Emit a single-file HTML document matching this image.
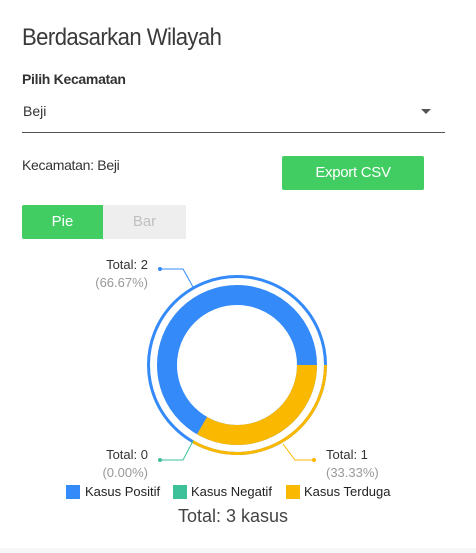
<!DOCTYPE html>
<html><head><meta charset="utf-8"><style>
html,body{margin:0;padding:0;background:#fff;width:476px;height:553px;overflow:hidden;font-family:"Liberation Sans",sans-serif;color:#333;position:relative}
.a{position:absolute;white-space:nowrap}
</style></head><body>
<div class="a" style="left:22px;top:24px;font-size:24px;color:#3a3a3a;letter-spacing:-0.6px;transform:scaleX(0.92);transform-origin:left">Berdasarkan Wilayah</div>
<div class="a" style="left:22px;top:71px;font-size:14px;font-weight:bold;color:#333;letter-spacing:-0.3px">Pilih Kecamatan</div>
<div class="a" style="left:23px;top:103px;font-size:14px;color:#333">Beji</div>
<div class="a" style="left:421px;top:109px;width:0;height:0;border-left:5px solid transparent;border-right:5px solid transparent;border-top:5px solid #555"></div>
<div class="a" style="left:22px;top:132px;width:423px;height:1px;background:#555"></div>
<div class="a" style="left:22px;top:157px;font-size:14px;color:#333;letter-spacing:-0.3px">Kecamatan: Beji</div>
<div class="a" style="left:282px;top:156px;width:142px;height:34px;background:#42cd63;border-radius:2px;color:#fff;font-size:15px;line-height:34px;text-align:center;letter-spacing:-0.3px">Export CSV</div>
<div class="a" style="left:22px;top:205px;width:81px;height:34px;background:#42cd63;color:#fff;font-size:15px;line-height:34px;text-align:center;border-radius:2px 0 0 2px">Pie</div>
<div class="a" style="left:103px;top:205px;width:83px;height:34px;background:#eeeeee;color:#c0c0c0;font-size:15px;line-height:34px;text-align:center">Bar</div>
<svg class="a" style="left:0;top:0" width="476" height="553">
<g fill="none">
<circle cx="237" cy="365" r="70" stroke="#338af8" stroke-width="20"/>
<path d="M307 365 A70 70 0 0 1 202 425.6" stroke="#fbb800" stroke-width="20"/>
<circle cx="237" cy="365" r="88.5" stroke="#338af8" stroke-width="3"/>
<path d="M325.5 365 A88.5 88.5 0 0 1 192.75 441.6" stroke="#fbb800" stroke-width="3"/>
<path d="M160 269 H183 L193 287" stroke="#338af8" stroke-width="1"/>
<path d="M160 460 H183 L193 441" stroke="#3dc19b" stroke-width="1"/>
<path d="M314 460 H295 L283 444" stroke="#fbb800" stroke-width="1"/>
</g>
<circle cx="160" cy="269" r="2" fill="#338af8"/>
<circle cx="160" cy="460" r="2" fill="#3dc19b"/>
<circle cx="314" cy="460" r="2" fill="#fbb800"/>
<rect x="66" y="485" width="14" height="14" fill="#338af8"/>
<rect x="173" y="485" width="14" height="14" fill="#3dc19b"/>
<rect x="286" y="485" width="14" height="14" fill="#fbb800"/>
</svg>
<div class="a" style="right:328px;top:257px;font-size:13px;color:#333;text-align:right">Total: 2</div>
<div class="a" style="right:328px;top:275px;font-size:13px;color:#999;text-align:right">(66.67%)</div>
<div class="a" style="right:328px;top:447px;font-size:13px;color:#333;text-align:right">Total: 0</div>
<div class="a" style="right:328px;top:465px;font-size:13px;color:#999;text-align:right">(0.00%)</div>
<div class="a" style="left:326px;top:447px;font-size:13px;color:#333">Total: 1</div>
<div class="a" style="left:326px;top:465px;font-size:13px;color:#999">(33.33%)</div>
<div class="a" style="left:85px;top:484px;font-size:13px;color:#222">Kasus Positif</div>
<div class="a" style="left:191px;top:484px;font-size:13px;color:#222">Kasus Negatif</div>
<div class="a" style="left:304px;top:484px;font-size:13px;color:#222">Kasus Terduga</div>
<div class="a" style="left:0;width:466px;top:506px;font-size:18px;color:#444;text-align:center">Total: 3 kasus</div>
<div class="a" style="left:0;top:548px;width:476px;height:5px;background:#f7f7f7"></div>
</body></html>
